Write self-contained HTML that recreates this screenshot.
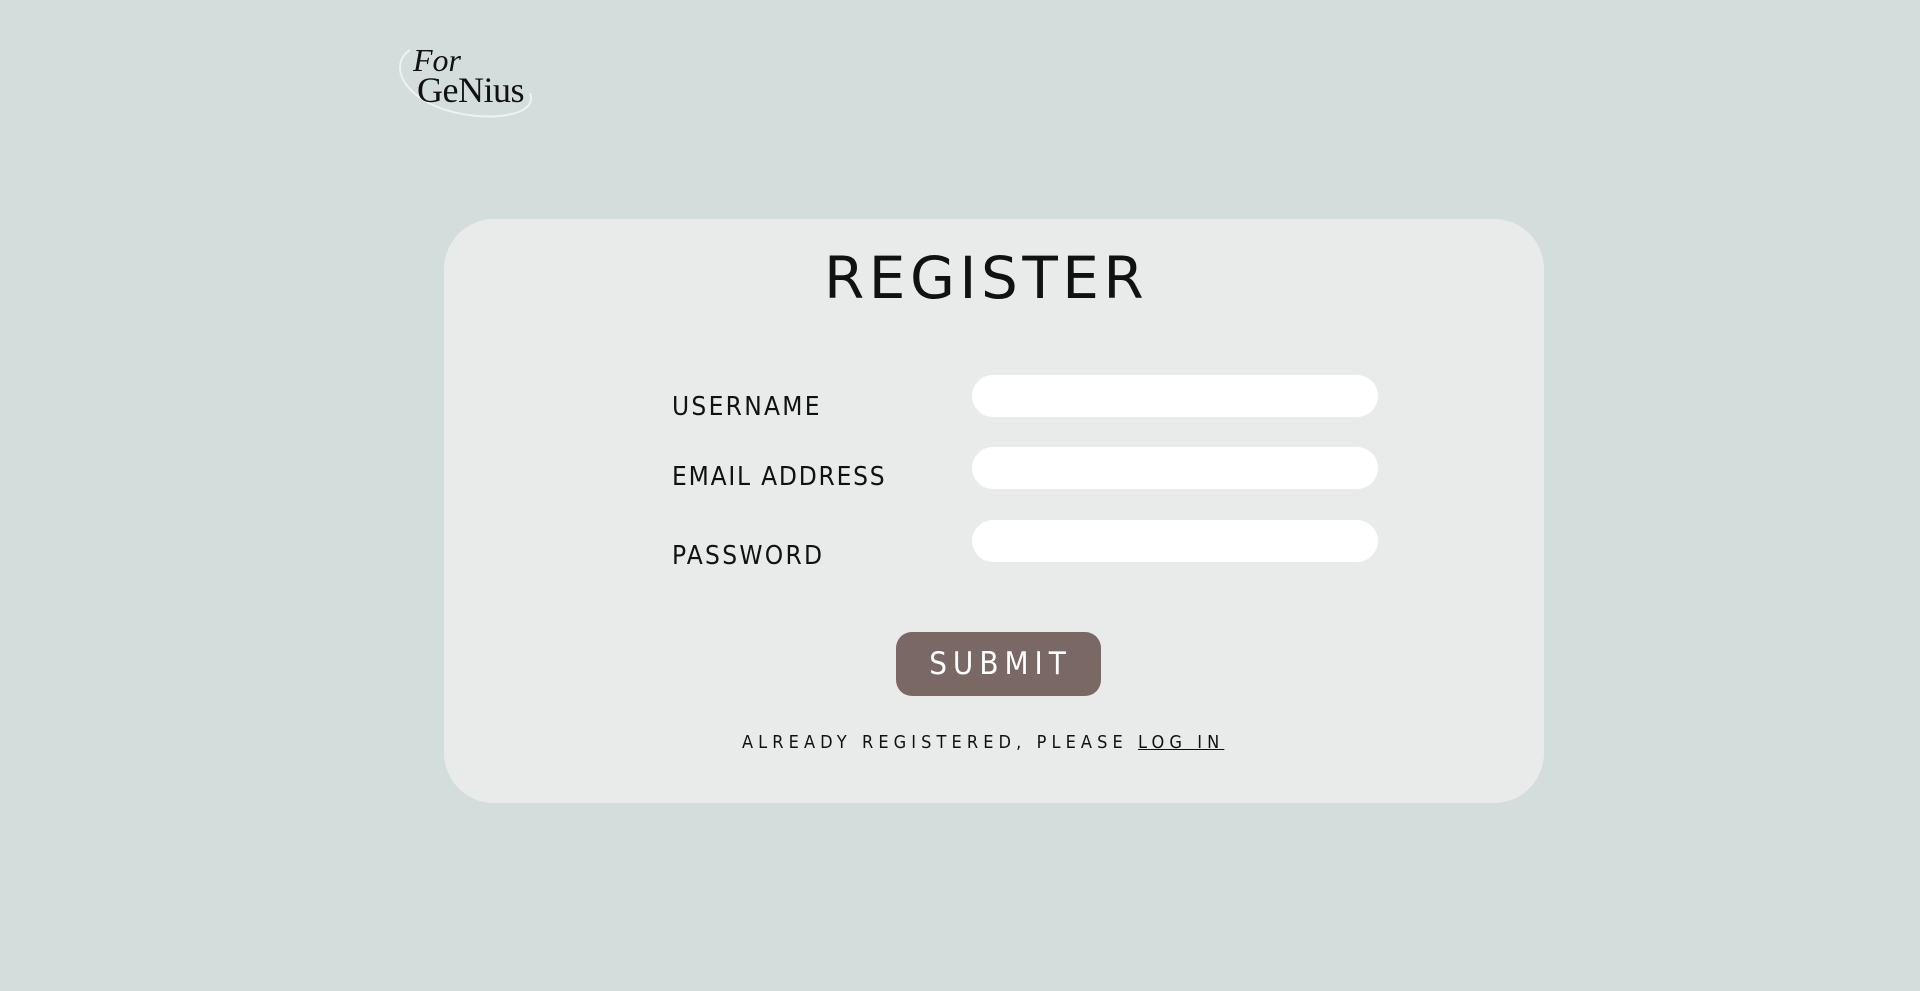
<!DOCTYPE html>
<html><head><meta charset="utf-8"><style>
body{margin:0;width:1920px;height:991px;background:#d3dddc;font-family:"DejaVu Sans Condensed","Liberation Sans",sans-serif;position:relative;overflow:hidden}
.card{position:absolute;left:444px;top:219px;width:1100px;height:584px;background:#e8ebea;border-radius:50px}
.t{position:absolute;white-space:nowrap;color:#111;font-weight:300}
.in{position:absolute;left:972px;width:406px;height:42px;background:#fff;border-radius:21px}
.btn{position:absolute;left:896px;top:632px;width:205px;height:64px;background:#7a6864;border-radius:16px;color:#fff;font-size:31px;letter-spacing:6px;text-align:center;line-height:64px;text-indent:4px}
</style></head><body>
<svg style="position:absolute;left:390px;top:38px" width="160" height="85">
<path d="M20 12 C0 25,10 55,50 70 C90 85,150 80,140 55" fill="none" stroke="#eef2f1" stroke-width="2"/>
<text x="23" y="33" font-family="Liberation Serif" font-style="italic" font-size="32" fill="#111">For</text>
<text x="27" y="64" font-family="Liberation Serif" font-size="36" fill="#111" letter-spacing="-0.5">GeNius</text>
</svg>
<div class="card"></div>
<div class="t" style="left:824px;top:244px;font-size:58px;letter-spacing:4.5px;font-family:'DejaVu Sans','Liberation Sans',sans-serif;font-weight:normal">REGISTER</div>
<div class="t" style="left:672px;top:392px;font-size:26px;letter-spacing:2.3px">USERNAME</div>
<div class="t" style="left:672px;top:462px;font-size:26px;letter-spacing:1.8px">EMAIL ADDRESS</div>
<div class="t" style="left:672px;top:541px;font-size:26px;letter-spacing:2.3px">PASSWORD</div>
<div class="in" style="top:375px"></div>
<div class="in" style="top:447px"></div>
<div class="in" style="top:520px"></div>
<div class="btn">SUBMIT</div>
<div class="t" style="left:742px;top:732px;font-size:18px;letter-spacing:5.1px">ALREADY REGISTERED, PLEASE <span style="text-decoration:underline">LOG IN</span></div>
</body></html>
